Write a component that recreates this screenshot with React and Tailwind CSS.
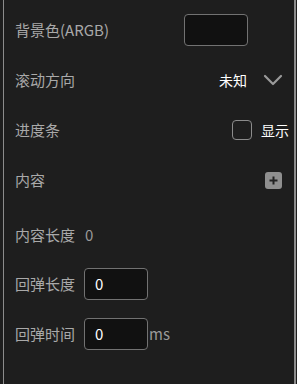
import React from 'react';

const labelCls = 'text-[15px] text-[#a9a9a9]';

const Row = ({ className = '', children }) => (
  <div className={`flex items-center justify-between ${className}`}>{children}</div>
);

const NumberBox = ({ value }) => (
  <div className="w-[64px] h-[32px] rounded-[4px] border border-[#727272] bg-[#111111] flex items-center pl-[10px] text-[15px] text-white">
    {value}
  </div>
);

export default function App() {
  return (
    <div
      className="w-[297px] h-[384px] bg-[#1e1e1e] overflow-hidden"
      style={{ fontFamily: '"Noto Sans CJK SC", "Noto Sans", sans-serif' }}
    >
      <div className="ml-[3px] w-[293px] h-full border-l border-r-2 border-[#8c8c8c] pl-[11px] pt-[5px]">
        {/* 背景色 */}
        <Row className="h-[50px]">
          <span className={labelCls}>背景色(ARGB)</span>
          <div className="mr-[46px] w-[64px] h-[32px] rounded-[4px] border border-[#727272] bg-[#111111]" />
        </Row>

        {/* 滚动方向 */}
        <Row className="h-[50px]">
          <span className={labelCls}>滚动方向</span>
          <div className="flex items-center mr-[11px]">
            <span className="text-[14px] text-white">未知</span>
            <svg className="ml-[16px]" width="20" height="12" viewBox="0 0 20 12" fill="none">
              <path d="M2 2 L10 10 L18 2" stroke="#9a9a9a" strokeWidth="2.2" strokeLinecap="round" strokeLinejoin="round" />
            </svg>
          </div>
        </Row>

        {/* 进度条 */}
        <Row className="h-[50px]">
          <span className={labelCls}>进度条</span>
          <div className="flex items-center mr-[5px]">
            <div className="w-[20px] h-[20px] rounded-[4px] border border-[#8c8c8c]" />
            <span className="ml-[9px] text-[14px] text-white">显示</span>
          </div>
        </Row>

        {/* 内容 */}
        <Row className="h-[50px]">
          <span className={labelCls}>内容</span>
          <div className="mr-[12px] w-[17px] h-[17px] rounded-[3px] bg-[#8f8f8f] flex items-center justify-center">
            <svg width="9" height="9" viewBox="0 0 9 9">
              <path d="M4.5 0.5 V8.5 M0.5 4.5 H8.5" stroke="#222" strokeWidth="2" />
            </svg>
          </div>
        </Row>

        {/* 内容长度 */}
        <div className="h-[60px] flex items-center">
          <span className={labelCls}>内容长度</span>
          <span className="ml-[10px] text-[15px] text-[#9a9a9a]">0</span>
        </div>

        <div className="mt-[3px] flex flex-col gap-[18px]">
          <div className="flex items-center">
            <span className={`${labelCls} w-[69px]`}>回弹长度</span>
            <NumberBox value="0" />
          </div>
          <div className="flex items-center">
            <span className={`${labelCls} w-[69px]`}>回弹时间</span>
            <NumberBox value="0" />
            <span className="ml-[1px] text-[15px] text-[#9a9a9a]">ms</span>
          </div>
        </div>
      </div>
    </div>
  );
}
